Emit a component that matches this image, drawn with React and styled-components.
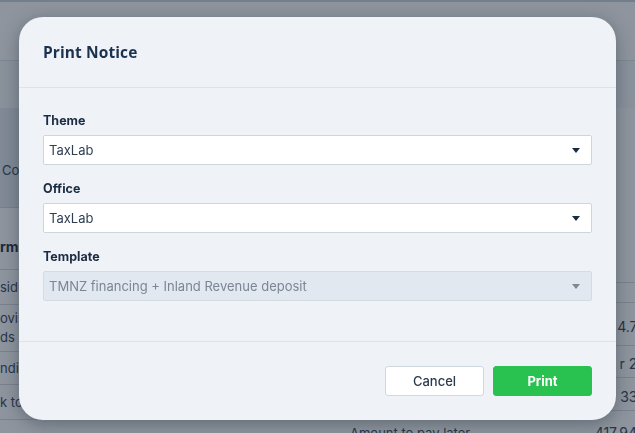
import React from 'react';
import styled, { createGlobalStyle } from 'styled-components';

const GlobalStyle = createGlobalStyle`
  html, body {
    margin: 0;
    padding: 0;
    overflow: hidden;
    background: #ffffff;
  }
  * { box-sizing: border-box; }
`;

/* ---------- page behind the dialog ---------- */

const Page = styled.div`
  width: 646px;
  height: 433px;
  display: flex;
  flex-direction: column;
  background: #ffffff;
  font-family: Inter, "Liberation Sans", sans-serif;
  font-size: 13px;
  color: #334155;
`;

const TopBar = styled.div`
  height: 61px;
  flex-shrink: 0;
  border-top: 2px solid #c9d1da;
  border-bottom: 1px solid #dfe4ea;
  background: #ffffff;
`;

const SubBar = styled.div`
  height: 47px;
  flex-shrink: 0;
  background: #f7f9fb;
`;

const Main = styled.div`
  flex: 1;
  display: flex;
  min-height: 0;
  overflow: hidden;
`;

const LeftPane = styled.div`
  width: 330px;
  flex-shrink: 0;
  display: flex;
  flex-direction: column;
`;

const Summary = styled.div`
  height: 100px;
  flex-shrink: 0;
  display: flex;
  align-items: center;
  padding: 24px 2px 0;
  background: #e4e9ef;
  border-bottom: 1px solid #cfd6de;
`;

const SectionTitle = styled.div`
  flex-shrink: 0;
  padding: 30px 0 14px;
  font-weight: 700;
  font-size: 14px;
  line-height: 17px;
  color: #1e293b;
  border-bottom: 1px solid #d5dbe2;
`;

const LeftRow = styled.div`
  flex-shrink: 0;
  height: ${({ $h }) => $h}px;
  display: flex;
  flex-direction: column;
  justify-content: center;
  line-height: 19px;
  border-bottom: 1px solid #d5dbe2;
`;

const RightPane = styled.div`
  flex: 1;
  display: flex;
  flex-direction: column;
  padding: 174px 0 0 20px;
`;

const TableRow = styled.div`
  flex-shrink: 0;
  height: ${({ $h }) => $h}px;
  display: flex;
  align-items: center;
  justify-content: space-between;
  padding-top: 4px;
  border-top: 1px solid #d5dbe2;
`;

const RowLabel = styled.span`
  color: #334155;
`;

const RowValue = styled.span`
  font-size: 14px;
  color: #334155;
`;

/* ---------- dialog ---------- */

const Overlay = styled.div`
  position: fixed;
  inset: 0;
  background: rgba(30, 44, 62, 0.5);
  display: flex;
  justify-content: center;
  align-items: flex-start;
  padding-top: 17px;
`;

const Modal = styled.div`
  width: 597px;
  background: #eff2f7;
  border-radius: 24px;
  box-shadow: 0 4px 18px rgba(15, 25, 40, 0.35);
  font-family: Inter, "Liberation Sans", sans-serif;
  display: flex;
  flex-direction: column;
  overflow: hidden;
`;

const Header = styled.div`
  height: 71px;
  display: flex;
  align-items: center;
  padding: 0 24px;
  border-bottom: 1px solid #dde3ea;
`;

const Title = styled.h2`
  margin: 0;
  font-family: "Open Sans", "Liberation Sans", sans-serif;
  font-weight: 700;
  font-size: 15.5px;
  color: #1a3150;
  letter-spacing: 0.1px;
`;

const Body = styled.div`
  display: flex;
  flex-direction: column;
  gap: 16px;
  padding: 25px 24px 40px;
`;

const Field = styled.div`
  display: flex;
  flex-direction: column;
  gap: 7px;
`;

const Label = styled.label`
  font-size: 12.5px;
  line-height: 15px;
  font-weight: 700;
  color: #1c2d42;
`;

const SelectBox = styled.div`
  height: 30px;
  display: flex;
  align-items: center;
  justify-content: space-between;
  padding: 0 11px 0 5px;
  border: 1px solid ${({ $disabled }) => ($disabled ? '#d3dbe3' : '#cdd6de')};
  border-radius: 2px;
  background: ${({ $disabled }) => ($disabled ? '#e2e8f0' : '#ffffff')};
  color: ${({ $disabled }) => ($disabled ? '#7b8594' : '#2f3e52')};
  font-size: 13px;
`;

const Caret = styled.svg`
  width: 8px;
  height: 5px;
  fill: ${({ $disabled }) => ($disabled ? '#7d8896' : '#1a2c44')};
`;

const Footer = styled.div`
  display: flex;
  justify-content: flex-end;
  gap: 9px;
  padding: 24px;
  border-top: 1px solid #dde3ea;
`;

const Button = styled.button`
  width: 99px;
  height: 30px;
  border-radius: 3px;
  font-family: Inter, "Liberation Sans", sans-serif;
  font-size: 13px;
  cursor: pointer;
  border: 1px solid ${({ $primary }) => ($primary ? '#29c150' : '#cfd8df')};
  background: ${({ $primary }) => ($primary ? '#29c150' : '#ffffff')};
  color: ${({ $primary }) => ($primary ? '#ffffff' : '#2a3a4e')};
  font-weight: ${({ $primary }) => ($primary ? 700 : 500)};
`;

const Select = ({ value, disabled }) => (
  <SelectBox $disabled={disabled}>
    <span>{value}</span>
    <Caret $disabled={disabled} viewBox="0 0 8 5">
      <path d="M0 0h8L4 5z" />
    </Caret>
  </SelectBox>
);

const fields = [
  { label: 'Theme', value: 'TaxLab' },
  { label: 'Office', value: 'TaxLab' },
  { label: 'Template', value: 'TMNZ financing + Inland Revenue deposit', disabled: true },
];

const App = () => (
  <>
    <GlobalStyle />
    <Page>
      <TopBar />
      <SubBar />
      <Main>
        <LeftPane>
          <Summary>Compare</Summary>
          <SectionTitle>rms</SectionTitle>
          <LeftRow $h={35}>sidual tax</LeftRow>
          <LeftRow $h={47}>
            <span>ovisional tax</span>
            <span>ds</span>
          </LeftRow>
          <LeftRow $h={33}>nding</LeftRow>
          <LeftRow $h={35}>k to pay</LeftRow>
        </LeftPane>
        <RightPane>
          <TableRow $h={20} />
          <TableRow $h={43}>
            <RowLabel />
            <RowValue>4.72</RowValue>
          </TableRow>
          <TableRow $h={32}>
            <RowLabel />
            <RowValue>r 20</RowValue>
          </TableRow>
          <TableRow $h={33}>
            <RowLabel />
            <RowValue>335</RowValue>
          </TableRow>
          <TableRow $h={40}>
            <RowLabel>Amount to pay later</RowLabel>
            <RowValue>417,944</RowValue>
          </TableRow>
        </RightPane>
      </Main>
    </Page>
    <Overlay>
      <Modal>
        <Header>
          <Title>Print Notice</Title>
        </Header>
        <Body>
          {fields.map((f) => (
            <Field key={f.label}>
              <Label>{f.label}</Label>
              <Select value={f.value} disabled={f.disabled} />
            </Field>
          ))}
        </Body>
        <Footer>
          <Button>Cancel</Button>
          <Button $primary>Print</Button>
        </Footer>
      </Modal>
    </Overlay>
  </>
);

export default App;
